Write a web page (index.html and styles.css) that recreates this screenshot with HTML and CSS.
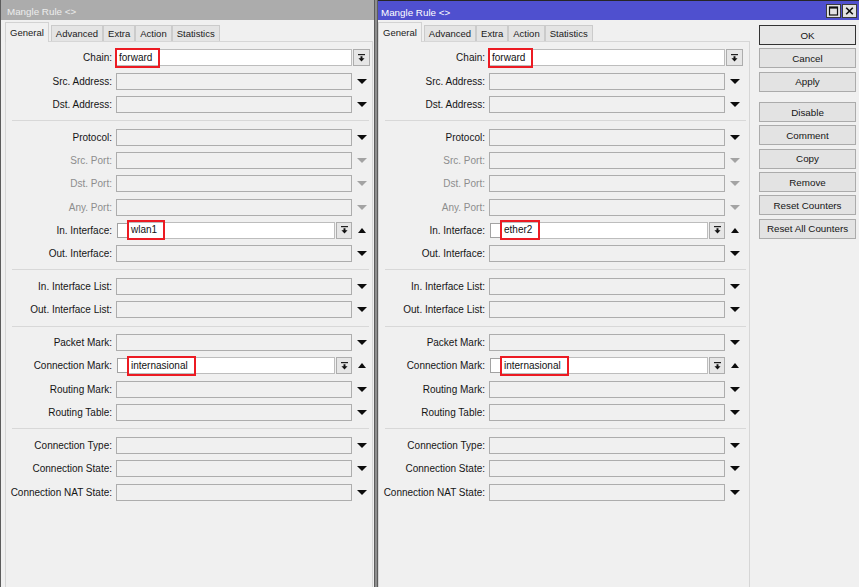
FILE: index.html
```html
<!DOCTYPE html>
<html>
<head>
  <meta charset='UTF-8'>
  <title>Mangle Rule</title>
  <link rel="stylesheet" href="styles.css">
</head>
<body>

  <!-- Inactive window -->
  <div class='window left'>
    <div class='titlebar'><span class='title'>Mangle Rule &lt;&gt;</span></div>
    <div class='winbody'>
      <div class='tabbox'>
        <div class='tabs'>
          <span class='tab active'>General</span>
          <span class='tab'>Advanced</span>
          <span class='tab'>Extra</span>
          <span class='tab'>Action</span>
          <span class='tab'>Statistics</span>
        </div>
        <div class='panel'>
          <div class='row'><label>Chain:</label><div class='field fill'><span class='mark'>forward</span></div><div class='tail start'><span class='drop'><svg viewBox='0 0 8 9'><rect x='0' y='0' width='8' height='1.3'/><path d='M2.9 2.6h2.2v2.3h2.4L4 8.6 0.5 4.9h2.4z'/></svg></span></div></div>
          <div class='row'><label>Src. Address:</label><div class='field'></div><div class='tail'><i class='down'></i></div></div>
          <div class='row'><label>Dst. Address:</label><div class='field'></div><div class='tail'><i class='down'></i></div></div>
          <div class='sep'></div>
          <div class='row'><label>Protocol:</label><div class='field'></div><div class='tail'><i class='down'></i></div></div>
          <div class='row dim'><label>Src. Port:</label><div class='field'></div><div class='tail'><i class='down'></i></div></div>
          <div class='row dim'><label>Dst. Port:</label><div class='field'></div><div class='tail'><i class='down'></i></div></div>
          <div class='row dim'><label>Any. Port:</label><div class='field'></div><div class='tail'><i class='down'></i></div></div>
          <div class='row'><label>In. Interface:</label><div class='combo'><span class='check'></span><div class='field fill'><span class='mark'>wlan1</span></div><span class='drop'><svg viewBox='0 0 8 9'><rect x='0' y='0' width='8' height='1.3'/><path d='M2.9 2.6h2.2v2.3h2.4L4 8.6 0.5 4.9h2.4z'/></svg></span></div><div class='tail'><i class='up'></i></div></div>
          <div class='row'><label>Out. Interface:</label><div class='field'></div><div class='tail'><i class='down'></i></div></div>
          <div class='sep'></div>
          <div class='row'><label>In. Interface List:</label><div class='field'></div><div class='tail'><i class='down'></i></div></div>
          <div class='row'><label>Out. Interface List:</label><div class='field'></div><div class='tail'><i class='down'></i></div></div>
          <div class='sep'></div>
          <div class='row'><label>Packet Mark:</label><div class='field'></div><div class='tail'><i class='down'></i></div></div>
          <div class='row'><label>Connection Mark:</label><div class='combo'><span class='check'></span><div class='field fill'><span class='mark'>internasional</span></div><span class='drop'><svg viewBox='0 0 8 9'><rect x='0' y='0' width='8' height='1.3'/><path d='M2.9 2.6h2.2v2.3h2.4L4 8.6 0.5 4.9h2.4z'/></svg></span></div><div class='tail'><i class='up'></i></div></div>
          <div class='row'><label>Routing Mark:</label><div class='field'></div><div class='tail'><i class='down'></i></div></div>
          <div class='row'><label>Routing Table:</label><div class='field'></div><div class='tail'><i class='down'></i></div></div>
          <div class='sep'></div>
          <div class='row'><label>Connection Type:</label><div class='field'></div><div class='tail'><i class='down'></i></div></div>
          <div class='row'><label>Connection State:</label><div class='field'></div><div class='tail'><i class='down'></i></div></div>
          <div class='row'><label>Connection NAT State:</label><div class='field'></div><div class='tail'><i class='down'></i></div></div>
        </div>
      </div>
    </div>
  </div>

  <!-- Active window -->
  <div class='window right'>
    <div class='titlebar'>
      <span class='title'>Mangle Rule &lt;&gt;</span>
      <span class='tbtn'><svg viewBox='0 0 13 12'><rect x='2.5' y='2' width='8' height='8' fill='none' stroke='#111' stroke-width='1.2'/><rect x='2.5' y='2' width='8' height='1.6' fill='#111'/></svg></span>
      <span class='tbtn'><svg viewBox='0 0 13 12'><path d='M3.2 2.7l6.6 6.6M9.8 2.7l-6.6 6.6' stroke='#111' stroke-width='1.6'/></svg></span>
    </div>
    <div class='winbody'>
      <div class='tabbox'>
        <div class='tabs'>
          <span class='tab active'>General</span>
          <span class='tab'>Advanced</span>
          <span class='tab'>Extra</span>
          <span class='tab'>Action</span>
          <span class='tab'>Statistics</span>
        </div>
        <div class='panel'>
          <div class='row'><label>Chain:</label><div class='field fill'><span class='mark'>forward</span></div><div class='tail start'><span class='drop'><svg viewBox='0 0 8 9'><rect x='0' y='0' width='8' height='1.3'/><path d='M2.9 2.6h2.2v2.3h2.4L4 8.6 0.5 4.9h2.4z'/></svg></span></div></div>
          <div class='row'><label>Src. Address:</label><div class='field'></div><div class='tail'><i class='down'></i></div></div>
          <div class='row'><label>Dst. Address:</label><div class='field'></div><div class='tail'><i class='down'></i></div></div>
          <div class='sep'></div>
          <div class='row'><label>Protocol:</label><div class='field'></div><div class='tail'><i class='down'></i></div></div>
          <div class='row dim'><label>Src. Port:</label><div class='field'></div><div class='tail'><i class='down'></i></div></div>
          <div class='row dim'><label>Dst. Port:</label><div class='field'></div><div class='tail'><i class='down'></i></div></div>
          <div class='row dim'><label>Any. Port:</label><div class='field'></div><div class='tail'><i class='down'></i></div></div>
          <div class='row'><label>In. Interface:</label><div class='combo'><span class='check'></span><div class='field fill'><span class='mark'>ether2</span></div><span class='drop'><svg viewBox='0 0 8 9'><rect x='0' y='0' width='8' height='1.3'/><path d='M2.9 2.6h2.2v2.3h2.4L4 8.6 0.5 4.9h2.4z'/></svg></span></div><div class='tail'><i class='up'></i></div></div>
          <div class='row'><label>Out. Interface:</label><div class='field'></div><div class='tail'><i class='down'></i></div></div>
          <div class='sep'></div>
          <div class='row'><label>In. Interface List:</label><div class='field'></div><div class='tail'><i class='down'></i></div></div>
          <div class='row'><label>Out. Interface List:</label><div class='field'></div><div class='tail'><i class='down'></i></div></div>
          <div class='sep'></div>
          <div class='row'><label>Packet Mark:</label><div class='field'></div><div class='tail'><i class='down'></i></div></div>
          <div class='row'><label>Connection Mark:</label><div class='combo'><span class='check'></span><div class='field fill'><span class='mark'>internasional</span></div><span class='drop'><svg viewBox='0 0 8 9'><rect x='0' y='0' width='8' height='1.3'/><path d='M2.9 2.6h2.2v2.3h2.4L4 8.6 0.5 4.9h2.4z'/></svg></span></div><div class='tail'><i class='up'></i></div></div>
          <div class='row'><label>Routing Mark:</label><div class='field'></div><div class='tail'><i class='down'></i></div></div>
          <div class='row'><label>Routing Table:</label><div class='field'></div><div class='tail'><i class='down'></i></div></div>
          <div class='sep'></div>
          <div class='row'><label>Connection Type:</label><div class='field'></div><div class='tail'><i class='down'></i></div></div>
          <div class='row'><label>Connection State:</label><div class='field'></div><div class='tail'><i class='down'></i></div></div>
          <div class='row'><label>Connection NAT State:</label><div class='field'></div><div class='tail'><i class='down'></i></div></div>
        </div>
      </div>

      <div class='side'>
        <button class='ok'>OK</button>
        <button>Cancel</button>
        <button>Apply</button>
        <button class='gap'>Disable</button>
        <button>Comment</button>
        <button>Copy</button>
        <button>Remove</button>
        <button>Reset Counters</button>
        <button>Reset All Counters</button>
      </div>
    </div>
  </div>

</body>
</html>
```

FILE: styles.css
```css
* { margin: 0; padding: 0; box-sizing: border-box; }
body { font-family: "Liberation Sans", Arial, sans-serif; font-size: 9.5px; color: #151515; background: #8e8e8e; width: 859px; height: 587px; overflow: hidden; display: flex; }

/* windows */
.window { height: 587px; background: #f0f0f0; display: flex; flex-direction: column; overflow: hidden; }
.window.left { width: 375px; border-left: 1px solid #5c5c5c; border-right: 1px solid #5c5c5c; margin-right: 2px; }
.window.right { flex: 1; border-left: 1px solid #5c5c5c; }

.titlebar { height: 20px; display: flex; align-items: center; flex: none; }
.title { font-size: 9.8px; padding-top: 3px; }
.left .titlebar { background: #acacac; color: #ececec; padding-left: 6px; }
.right .titlebar { background: #4f50cf; color: #fff; padding-left: 3px; padding-right: 2px; border-top: 1px solid #262626; }
.right .title { margin-right: auto; }
.tbtn { width: 15px; height: 14px; margin-left: 1px; background: #e2e2e2; border: 1px solid #3b3b3b; display: flex; align-items: center; justify-content: center; }
.tbtn svg { width: 13px; height: 12px; }

.winbody { flex: 1; display: flex; align-items: flex-start; }
.left .winbody { padding-left: 4px; }

/* tabs */
.tabbox { display: flex; flex-direction: column; }
.left .tabbox { width: 368px; }
.right .tabbox { width: 372px; }
.tabs { height: 21px; display: flex; align-items: flex-end; }
.tab { height: 16px; padding: 1px 4px 0; line-height: 14px; background: #e4e4e4; border: 1px solid #cbcbcb; border-bottom: none; color: #1a1a1a; }
.tab.active { height: 20px; margin-bottom: -1px; margin-right: 2px; padding: 3px 4px 0; background: #f0f0f0; border-color: #d2d2d2; position: relative; z-index: 1; }

.panel { height: 600px; border: 1px solid #d6d6d6; padding-top: 4px; }

/* form rows */
.row { display: grid; grid-template-columns: 110px 236px 20px; height: 23.35px; align-items: center; font-size: 10px; }
.row label { text-align: right; padding-right: 4px; white-space: nowrap; }
.row.dim label { color: #8d8d8d; }
.sep { margin: 4px 3px 4.4px 6px; border-top: 1px solid #d8d8d8; }

.field { height: 17px; border: 1px solid #adadad; background: #f0f0f0; display: flex; align-items: center; }
.field.fill { background: #fff; border-color: #bdbdbd; }
.mark { height: 20px; line-height: 16px; margin-left: -2px; padding: 0 6px 0 2px; border: 2px solid #ec1b23; color: #111; flex: none; position: relative; }

.combo { display: flex; align-items: center; height: 17px; }
.combo .field { flex: 1; }
.check { width: 11px; height: 15px; margin-left: 1px; background: #fff; border: 1px solid #a2a2a2; flex: none; }

.drop { width: 17px; height: 17px; background: #e6e6e6; border: 1px solid #adadad; display: flex; align-items: center; justify-content: center; flex: none; }
.combo .drop { width: 16px; margin-left: 1px; }
.drop svg { width: 7px; height: 8px; fill: #111; }

.tail { display: flex; align-items: center; justify-content: center; height: 17px; }
.tail.start { justify-content: flex-start; padding-left: 1px; }
.down { width: 0; height: 0; border-left: 5px solid transparent; border-right: 5px solid transparent; border-top: 5px solid #0c0c0c; }
.up { width: 0; height: 0; border-left: 4.5px solid transparent; border-right: 4.5px solid transparent; border-bottom: 5px solid #0c0c0c; }
.row.dim .down { border-top-color: #a3a3a3; }

/* side buttons */
.side { width: 97px; margin-left: 9px; padding-top: 5px; display: flex; flex-direction: column; }
.side button { height: 20px; margin-bottom: 3.35px; font-family: inherit; font-size: 9.8px; color: #151515; background: #e3e3e3; border: 1px solid #ababab; }
.side button.ok { background: #e6e6e6; border-color: #333; }
.side button.gap { margin-top: 7px; }
```
